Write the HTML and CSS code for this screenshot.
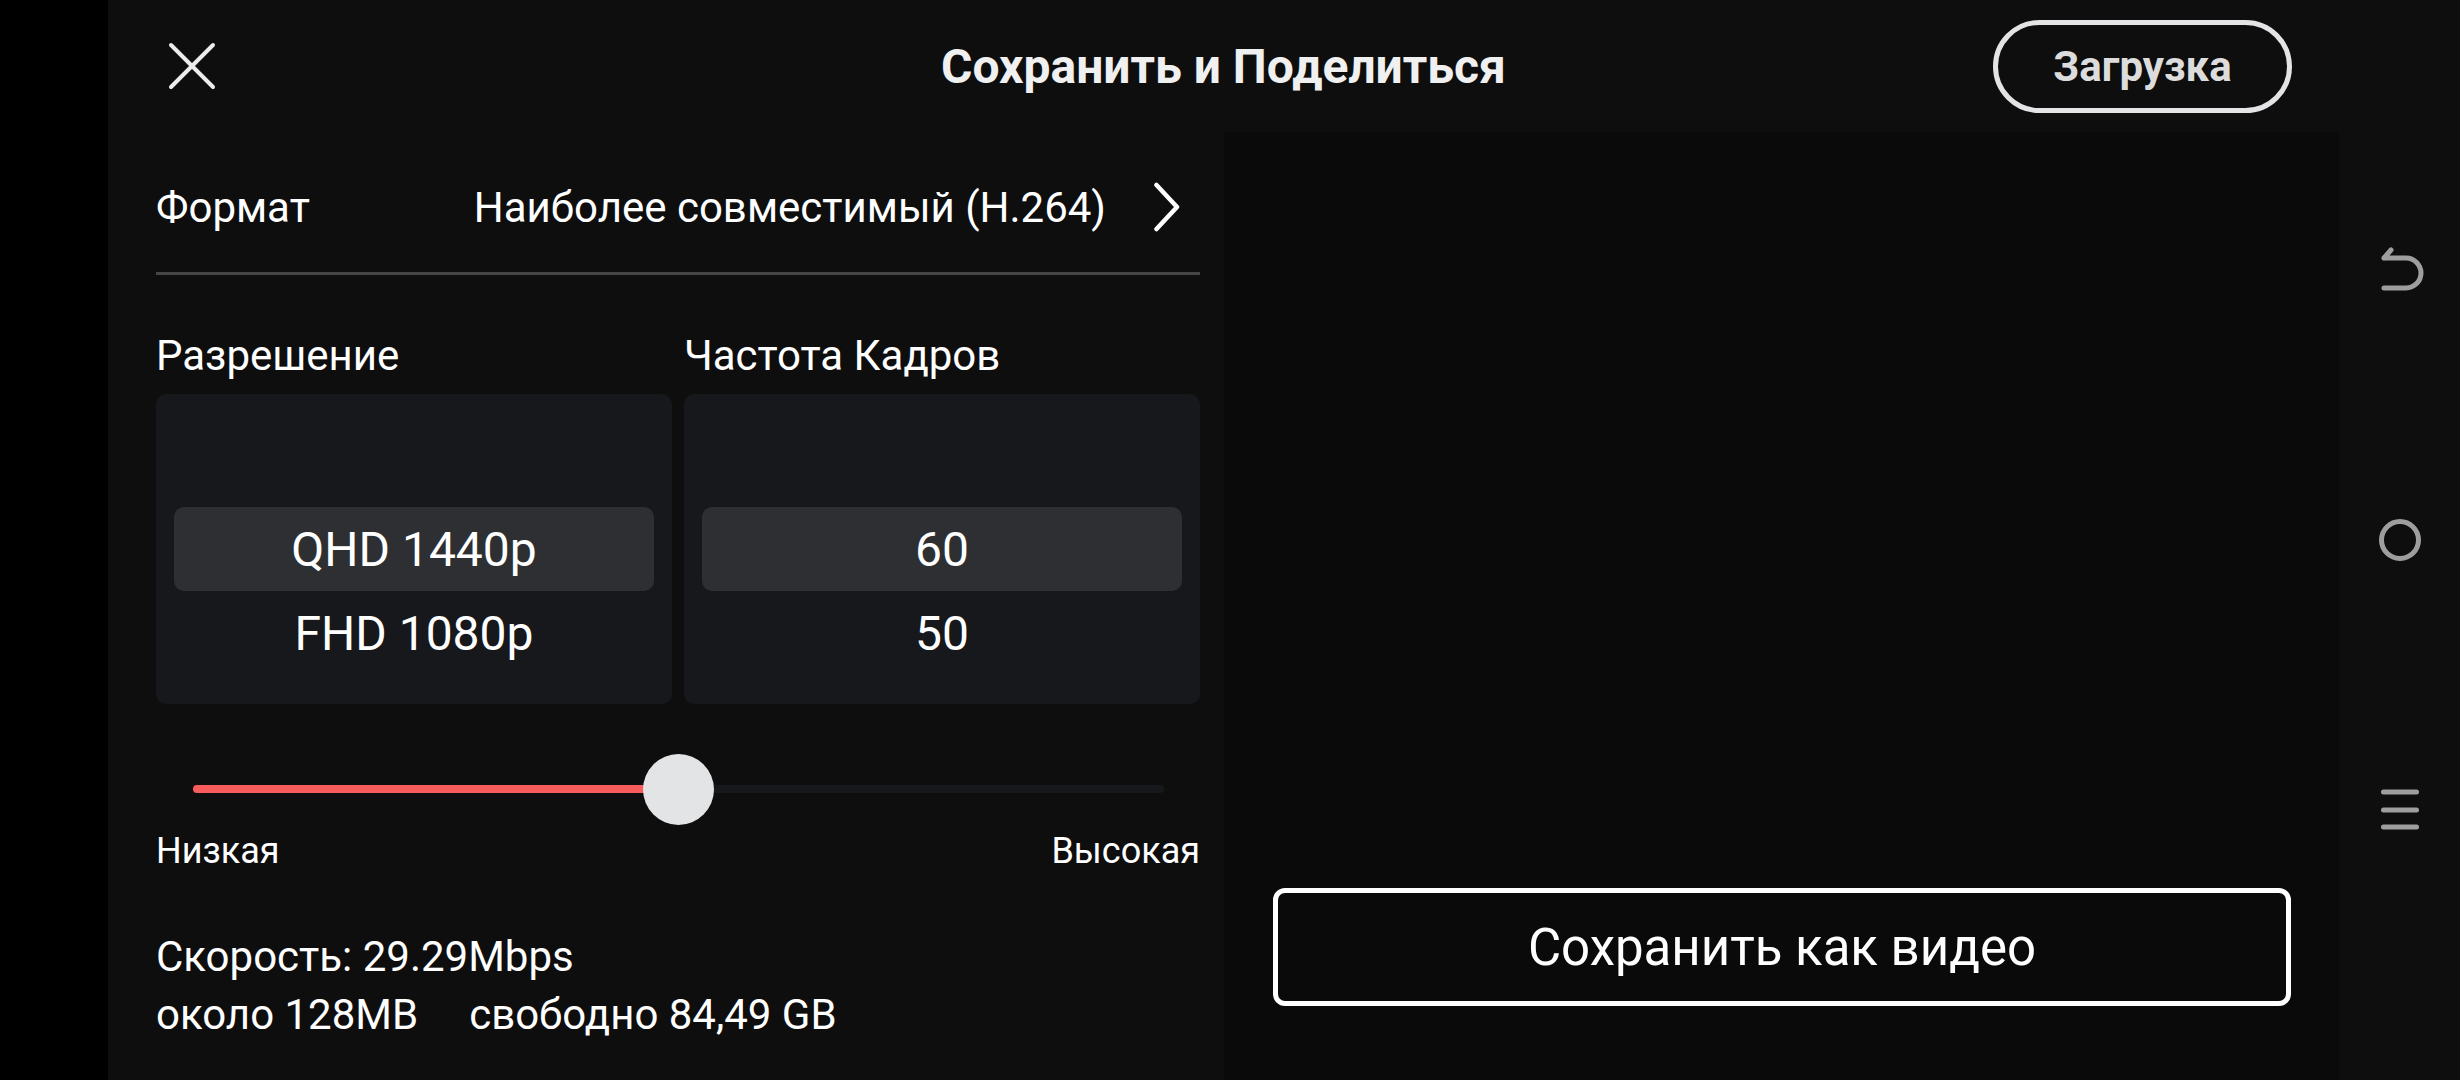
FILE: index.html
```html
<!DOCTYPE html>
<html lang="ru">
  <head>
    <meta charset="UTF-8" />
    <meta name="viewport" content="width=device-width, initial-scale=1.0" />
    <title>Сохранить и Поделиться</title>
    <link rel="stylesheet" href="styles.css">
  </head>
  <body>
    <div class="edge"></div>

    <div class="app">
      <header class="topbar">
        <div class="topbar-left">
          <button class="close" aria-label="Закрыть">
            <svg width="48" height="48" viewBox="0 0 48 48">
              <path d="M3 3 L45 45 M45 3 L3 45" stroke="#ececec" stroke-width="4" stroke-linecap="round" fill="none" />
            </svg>
          </button>
        </div>
        <h1 class="title">Сохранить и Поделиться</h1>
        <div class="topbar-right">
          <button class="upload">Загрузка</button>
        </div>
      </header>

      <div class="content">
        <section class="settings">
          <div class="format-row">
            <span>Формат</span>
            <span class="format-value">
              Наиболее совместимый (H.264)
              <svg width="47" height="50" viewBox="0 0 47 50">
                <path d="M3.5 3 L24 25 L3.5 47" stroke="#fff" stroke-width="4.5" stroke-linecap="round" stroke-linejoin="round" fill="none" />
              </svg>
            </span>
          </div>

          <div class="pickers">
            <div class="picker-col">
              <div class="picker-label">Разрешение</div>
              <div class="picker">
                <div class="picker-item"></div>
                <div class="picker-item selected">QHD 1440p</div>
                <div class="picker-item">FHD 1080p</div>
              </div>
            </div>
            <div class="picker-col">
              <div class="picker-label">Частота Кадров</div>
              <div class="picker">
                <div class="picker-item"></div>
                <div class="picker-item selected">60</div>
                <div class="picker-item">50</div>
              </div>
            </div>
          </div>

          <div class="quality">
            <div class="slider">
              <div class="slider-track">
                <div class="slider-fill" style="width: 50%"></div>
                <div class="slider-thumb" style="left: 50%"></div>
              </div>
            </div>
            <div class="slider-labels">
              <span>Низкая</span>
              <span>Высокая</span>
            </div>
          </div>

          <div class="stats">
            <div>Скорость: 29.29Mbps</div>
            <div class="stats-size">
              <span>около 128MB</span>
              <span>свободно 84,49 GB</span>
            </div>
          </div>
        </section>

        <section class="preview">
          <button class="save">Сохранить как видео</button>
        </section>
      </div>
    </div>

    <nav class="sysnav">
      <svg width="48" height="48" viewBox="0 0 48 48">
        <path d="M8 12 L15 4 M8 12 L30 12 A15 15 0 0 1 30 42 L8 42" stroke="#9e9e9e" stroke-width="5" stroke-linecap="round" stroke-linejoin="round" fill="none" />
      </svg>
      <svg width="48" height="48" viewBox="0 0 48 48">
        <circle cx="24" cy="24" r="18.5" stroke="#9e9e9e" stroke-width="5" fill="none" />
      </svg>
      <svg width="48" height="48" viewBox="0 0 48 48">
        <path d="M7.5 6 H40.5 M7.5 24 H40.5 M7.5 41 H40.5" stroke="#9e9e9e" stroke-width="5" stroke-linecap="round" fill="none" />
      </svg>
    </nav>
  </body>
</html>
```

FILE: styles.css
```css
html,
body {
  margin: 0;
  height: 100%;
}
body {
  display: flex;
  background: #000;
  color: #fff;
  font-family: Roboto, "Noto Sans", sans-serif;
  overflow: hidden;
}
button {
  font-family: inherit;
  cursor: pointer;
}
.edge {
  width: 108px;
  flex-shrink: 0;
  background: #000;
}
.app {
  flex: 1;
  display: flex;
  flex-direction: column;
  background: #0e0e0e;
}

/* top bar */
.topbar {
  height: 132px;
  flex-shrink: 0;
  display: grid;
  grid-template-columns: 1fr auto 1fr;
  align-items: center;
}
.topbar-left {
  padding-left: 60px;
}
.close {
  display: block;
  padding: 0;
  border: none;
  background: none;
}
.close svg {
  display: block;
}
.title {
  margin: 0;
  font-size: 48px;
  font-weight: 700;
  color: #f0f0f0;
}
.topbar-right {
  display: flex;
  justify-content: flex-end;
  padding-right: 47px;
}
.upload {
  box-sizing: border-box;
  width: 299px;
  height: 93px;
  border: 5px solid #e4e4e6;
  border-radius: 47px;
  background: transparent;
  color: #dcdcdc;
  font-size: 42px;
  font-weight: 700;
}

/* main */
.content {
  flex: 1;
  display: flex;
}
.settings {
  width: 1116px;
  flex-shrink: 0;
  box-sizing: border-box;
  padding: 10px 24px 0 48px;
}
.format-row {
  height: 130px;
  display: flex;
  justify-content: space-between;
  align-items: center;
  font-size: 42px;
  border-bottom: 3px solid #464646;
}
.format-value {
  display: flex;
  align-items: center;
  gap: 47px;
}
.format-value svg {
  display: block;
}

.pickers {
  display: grid;
  grid-template-columns: 1fr 1fr;
  gap: 12px;
  margin-top: 56px;
}
.picker-label {
  font-size: 42px;
  line-height: 49px;
  margin-bottom: 14px;
}
.picker {
  height: 310px;
  box-sizing: border-box;
  padding: 0 18px;
  background: #17181c;
  border-radius: 10px;
  display: flex;
  flex-direction: column;
  justify-content: center;
}
.picker-item {
  height: 84px;
  flex-shrink: 0;
  display: flex;
  align-items: center;
  justify-content: center;
  font-size: 48px;
  border-radius: 10px;
}
.picker-item.selected {
  background: #2e2f33;
}

.quality {
  margin-top: 49px;
}
.slider {
  height: 72px;
  margin: 0 36px 0 37px;
  display: flex;
  align-items: center;
}
.slider-track {
  position: relative;
  flex: 1;
  height: 8px;
  border-radius: 4px;
  background: #17181c;
}
.slider-fill {
  height: 100%;
  border-radius: 4px;
  background: #f95c5c;
}
.slider-thumb {
  position: absolute;
  top: 50%;
  width: 71px;
  height: 71px;
  margin: -35.5px 0 0 -35.5px;
  border-radius: 50%;
  background: #e3e4e6;
}
.slider-labels {
  display: flex;
  justify-content: space-between;
  margin-top: 6px;
  font-size: 36px;
  line-height: 41px;
}

.stats {
  margin-top: 56px;
  font-size: 42px;
  line-height: 58px;
}
.stats-size {
  display: flex;
  gap: 51px;
}

.preview {
  flex: 1;
  box-sizing: border-box;
  padding: 0 48px 74px 49px;
  background: #0a0a0a;
  display: flex;
  flex-direction: column;
  justify-content: flex-end;
}
.save {
  height: 118px;
  border: 5px solid #fff;
  border-radius: 12px;
  background: transparent;
  color: #fff;
  font-size: 51px;
}

/* system navigation */
.sysnav {
  width: 121px;
  flex-shrink: 0;
  box-sizing: border-box;
  padding: 24px 0;
  background: #0e0e0e;
  display: flex;
  flex-direction: column;
  justify-content: space-evenly;
  align-items: center;
}
.sysnav svg {
  display: block;
}
```
